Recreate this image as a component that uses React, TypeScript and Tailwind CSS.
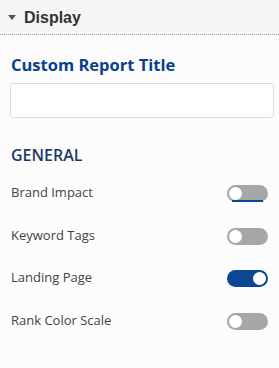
import React from 'react';

const Toggle: React.FC<{ on?: boolean; underline?: boolean }> = ({ on, underline }) => (
  <div
    className={`relative w-[41px] h-[17px] rounded-full flex items-center ${
      on ? 'bg-[#0c4793] justify-end' : 'bg-[#a7a7a7] justify-start'
    }`}
  >
    <div className="w-[13px] h-[13px] rounded-full bg-white mx-[2px]" />
    {underline && <div className="absolute left-[5px] right-[5px] bottom-0 h-[2px] bg-[#0c4793]" />}
  </div>
);

const rows = [
  { label: 'Brand Impact', on: false, underline: true },
  { label: 'Keyword Tags', on: false },
  { label: 'Landing Page', on: true },
  { label: 'Rank Color Scale', on: false },
];

const App: React.FC = () => {
  return (
    <div className="w-[279px] h-[368px] bg-[#fcfcfc] overflow-hidden">
      {/* Header */}
      <div className="h-[35px] bg-[#f5f5f5] border-b border-dotted border-[#9a9a9a] flex items-center pl-[8px]">
        <svg width="8" height="5" viewBox="0 0 8 5" className="mr-[8px] mt-[1px]">
          <path d="M0 0 H8 L4 5 Z" fill="#555" />
        </svg>
        <span className="font-['Liberation_Sans',Arial,sans-serif] font-bold text-[16px] leading-[20px] text-[#333] mt-[1px]">
          Display
        </span>
      </div>

      {/* Body */}
      <div className="px-[10px] font-['Open_Sans',sans-serif]">
        <div className="mt-[18px] pl-[1px] text-[16.5px] leading-[24px] font-bold text-[#0b3f8a]">
          Custom Report Title
        </div>
        <input
          type="text"
          className="mt-[6px] block w-[264px] h-[35px] bg-white border border-[#dcdcdc] rounded-[3px] outline-none"
        />

        <div className="mt-[26px] pl-[1px] text-[16px] leading-[22px] font-semibold text-[#1f3b63]">
          GENERAL
        </div>

        <div className="mt-[6px] flex flex-col">
          {rows.map((r) => (
            <div key={r.label} className="h-[42.7px] flex items-center justify-between pl-[1px] pr-[1px]">
              <span className="text-[13px] leading-[17px] text-[#444] mt-[-2px]">{r.label}</span>
              <Toggle on={r.on} underline={r.underline} />
            </div>
          ))}
        </div>
      </div>
    </div>
  );
};

export default App;
